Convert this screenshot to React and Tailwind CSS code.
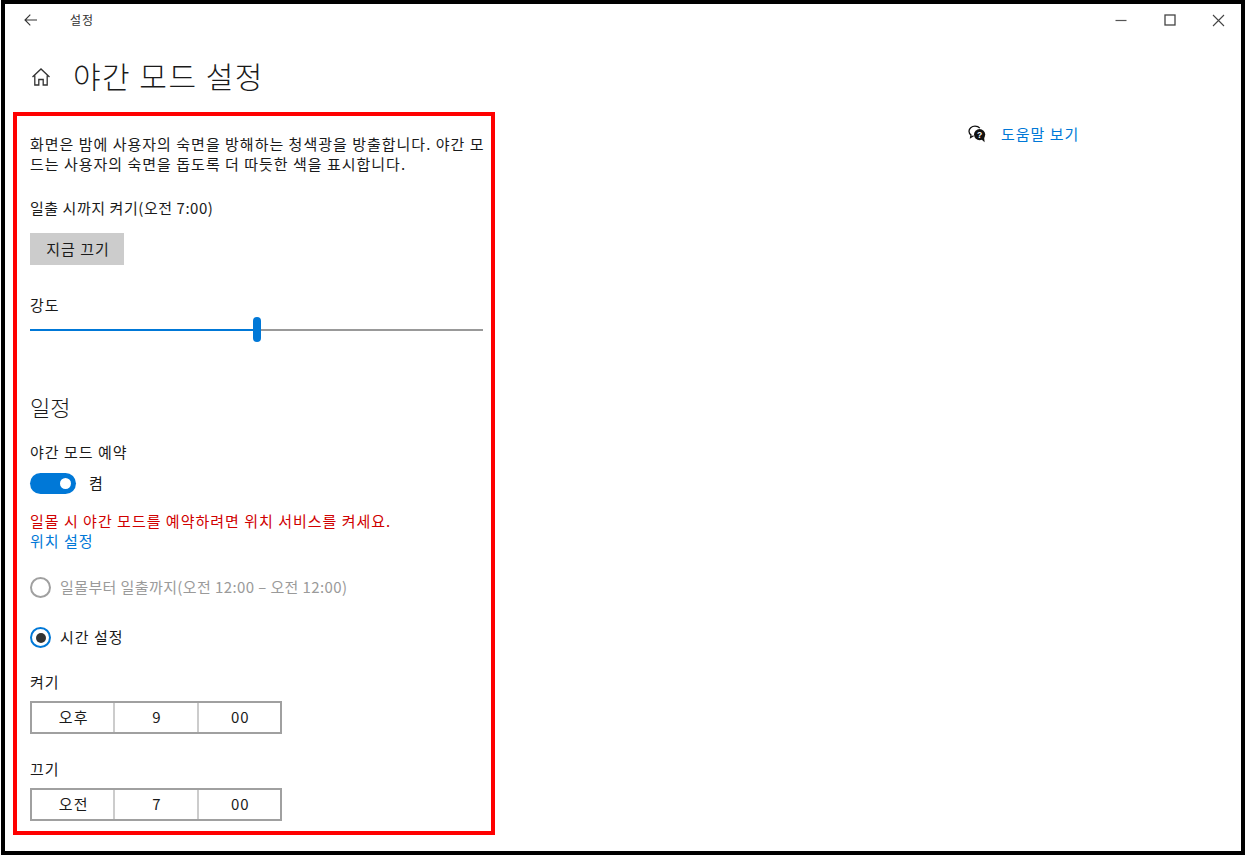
const FONT = { fontFamily: '"Noto Sans CJK KR", "Noto Sans", sans-serif' };

function TimePicker({ values }) {
  return (
    <div className="flex w-[252px] h-[33px] border-2 border-[#a0a0a0] text-[15px] text-[#1a1a1a]">
      {values.map((v, i) => (
        <div
          key={v + i}
          className={`flex-1 flex items-center justify-center pl-[2px] ${i > 0 ? "border-l-2 border-[#cccccc]" : ""}`}
        >
          {v}
        </div>
      ))}
    </div>
  );
}

function Radio({ checked, disabled, label }) {
  return (
    <div className={`flex items-center gap-[9px] h-[22px] text-[15px] ${disabled ? "text-[#9a9a9a] tracking-[0.4px]" : "text-[#1a1a1a] tracking-[1px]"}`}>
      <div
        className={`w-[21px] h-[21px] rounded-full border-2 flex items-center justify-center ${
          checked ? "border-[#0078d7]" : "border-[#a0a0a0]"
        }`}
      >
        {checked ? <div className="w-[10px] h-[10px] rounded-full bg-[#333333]" /> : null}
      </div>
      <span>{label}</span>
    </div>
  );
}

function HelpIcon() {
  return (
    <svg width="20" height="18" viewBox="0 0 20 18">
      <path d="M8 1.200c-3.400 0-6 2.200-6 5 0 1.500.8 2.900 2 3.800l-.4 2.600 3-1.800" fill="none" stroke="#111" strokeWidth="1.3" />
      <path d="M8 1.200c2 0 3.800.8 4.800 2" fill="none" stroke="#111" strokeWidth="1.3" />
      <circle cx="12.600" cy="9.600" r="5.600" fill="#111" />
      <path d="M14 14l3.600 3.200-.5-5z" fill="#111" />
      <text x="12.600" y="12.600" textAnchor="middle" fontSize="8.500" fontWeight="700" fill="#fff" fontFamily="Liberation Sans">?</text>
    </svg>
  );
}

export default function App() {
  return (
    <div className="w-[1248px] h-[856px] bg-white overflow-hidden" style={FONT}>
      <div className="w-[1244px] h-[855px] ml-px border-[4px] border-black bg-white flex flex-col">
        <div className="flex items-center h-[32px] shrink-0">
          <svg className="ml-[19px]" width="13" height="12" viewBox="0 0 13 12" fill="none" stroke="#333" strokeWidth="1.1">
            <path d="M13 6H1M6.300 .7L1 6l5.300 5.300" />
          </svg>
          <span className="ml-[33px] text-[12px] tracking-[1px] text-[#333333]">설정</span>
          <div className="ml-auto flex items-center">
            <svg width="12" height="12" viewBox="0 0 12 12" stroke="#555" strokeWidth="1.2">
              <path d="M0.500 6.500h11" />
            </svg>
            <svg className="ml-[37px]" width="12" height="12" viewBox="0 0 12 12" fill="none" stroke="#444" strokeWidth="1.3">
              <rect x="1" y="1" width="10" height="10" />
            </svg>
            <svg className="ml-[36px] mr-[16px]" width="13" height="13" viewBox="0 0 13 13" stroke="#444" strokeWidth="1.1">
              <path d="M1 1l11 11M12 1L1 12" />
            </svg>
          </div>
        </div>

        <div className="flex items-center h-[76px] shrink-0 pt-[2px]">
          <svg className="ml-[26px] mt-[3px]" width="20" height="20" viewBox="0 0 20 20" fill="none" stroke="#333" strokeWidth="1.3">
            <path d="M1.500 10L10 2l8.500 8M3.800 8.500V18h4v-5.500h4.400V18h4V8.500" />
          </svg>
          <h1 className="ml-[22px] text-[30px] font-light text-[#1a1a1a] tracking-[1.5px]">야간 모드 설정</h1>
        </div>

        <div className="flex flex-1 min-h-0">
          <div className="ml-[8px] w-[482px] h-[723px] border-[4px] border-[#ff0000] pl-[13px] pr-[5px] text-[15px] tracking-[1px] text-[#1a1a1a]">
            <p className="mt-[18px] leading-[20px] break-all">
              화면은 밤에 사용자의 숙면을 방해하는 청색광을 방출합니다. 야간 모드는 사용자의 숙면을 돕도록 더 따듯한 색을 표시합니다.
            </p>
            <p className="mt-[22px] leading-[24px] tracking-[0.55px]">일출 시까지 켜기(오전 7:00)</p>
            <button type="button" className="mt-[13px] block w-[94px] h-[32px] pl-[2px] bg-[#cccccc] text-[15px] tracking-[1px] text-[#1a1a1a]">
              지금 끄기
            </button>
            <p className="mt-[28px] leading-[24px]">강도</p>
            <div className="relative h-[26px] w-[453px] flex items-center">
              <div className="h-[2px] w-[227px] bg-[#0078d7]" />
              <div className="h-[2px] flex-1 bg-[#999999]" />
              <div className="absolute left-[223px] top-0 w-[8px] h-[25px] rounded-full bg-[#0078d7]" />
            </div>
            <h2 className="mt-[48px] text-[22px] tracking-normal leading-[30px] font-light">일정</h2>
            <p className="mt-[19px] leading-[24px]">야간 모드 예약</p>
            <div className="mt-[8px] flex items-center">
              <div className="w-[46px] h-[21px] rounded-full bg-[#0078d7] flex items-center justify-end pr-[5px]">
                <div className="w-[11px] h-[11px] rounded-full bg-white" />
              </div>
              <span className="ml-[13px]">켬</span>
            </div>
            <p className="mt-[16px] leading-[20px] text-[#d00000]">일몰 시 야간 모드를 예약하려면 위치 서비스를 켜세요.</p>
            <p className="leading-[20px] text-[#0078d7]">위치 설정</p>
            <div className="mt-[26px]">
              <Radio disabled label="일몰부터 일출까지(오전 12:00 – 오전 12:00)" />
            </div>
            <div className="mt-[28px]">
              <Radio checked label="시간 설정" />
            </div>
            <p className="mt-[21px] leading-[24px]">켜기</p>
            <div className="mt-[7px]">
              <TimePicker values={["오후", "9", "00"]} />
            </div>
            <p className="mt-[23px] leading-[24px]">끄기</p>
            <div className="mt-[7px]">
              <TimePicker values={["오전", "7", "00"]} />
            </div>
          </div>

          <div className="ml-[472px] mt-[13px] flex items-start">
            <HelpIcon />
            <span className="ml-[14px] text-[15px] leading-[18px] tracking-[1px] text-[#0078d7]">도움말 보기</span>
          </div>
        </div>
      </div>
    </div>
  );
}
